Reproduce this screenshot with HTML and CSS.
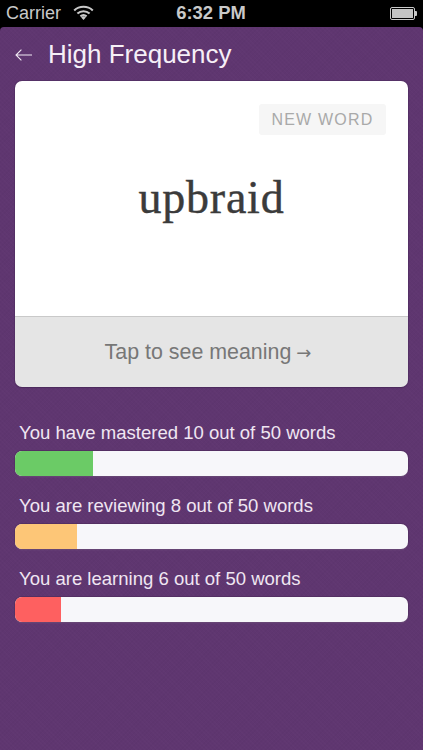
FILE: index.html
```html
<!DOCTYPE html>
<html lang="en">
<head>
<meta charset="utf-8">
<title>High Frequency</title>
<link rel="stylesheet" href="styles.css">
</head>
<body>
<div class="phone">
  <div class="status">
    <div class="status-left">
      <span class="carrier">Carrier</span>
      <svg class="wifi" width="21" height="15" viewBox="0 0 21 15" fill="none" stroke="#c9c9c9" stroke-width="2.1">
        <path d="M1.2 5.4C6.4.6 14.6.6 19.8 5.4"/>
        <path d="M4.4 8.6C7.9 5.4 13.1 5.4 16.6 8.6"/>
        <path d="M7.4 11.4C9.2 9.9 11.8 9.9 13.6 11.4"/>
        <path d="M10.5 15l-2.3-2.6a3.2 3.2 0 0 1 4.6 0z" fill="#c9c9c9" stroke="none"/>
      </svg>
    </div>
    <div class="clock">6:32 PM</div>
    <div class="status-right">
      <div class="battery"><div class="battery-fill"></div></div>
      <div class="battery-tip"></div>
    </div>
  </div>
  <main class="screen">
    <header class="header">
      <svg class="back" width="17" height="12" viewBox="0 0 17 12" fill="none" stroke="#f1e9f3" stroke-width="1.1">
        <path d="M1 6h16M6.4.6 1 6l5.4 5.4"/>
      </svg>
      <h1 class="title">High Frequency</h1>
    </header>
    <section class="card">
      <div class="card-face">
        <span class="tag">NEW WORD</span>
        <div class="word">upbraid</div>
      </div>
      <div class="card-action">Tap to see meaning <span class="arrow">→</span></div>
    </section>
    <section class="stats">
      <div class="stat">
        <div class="stat-label">You have mastered 10 out of 50 words</div>
        <div class="bar"><div class="bar-fill green"></div></div>
      </div>
      <div class="stat">
        <div class="stat-label">You are reviewing 8 out of 50 words</div>
        <div class="bar"><div class="bar-fill amber"></div></div>
      </div>
      <div class="stat">
        <div class="stat-label">You are learning 6 out of 50 words</div>
        <div class="bar"><div class="bar-fill red"></div></div>
      </div>
    </section>
  </main>
</div>
</body>
</html>
```
FILE: styles.css
```css
* { box-sizing: border-box; }
html, body { margin: 0; padding: 0; background: #000; }
body { font-family: "Liberation Sans", Arial, sans-serif; }
.phone { width: 423px; height: 750px; display: flex; flex-direction: column; overflow: hidden; }

.status { height: 27px; flex: none; background: #000; color: #c9c9c9; display: grid; grid-template-columns: 1fr auto 1fr; align-items: center; padding: 0 5px 1px 6px; }
.status-left { display: flex; align-items: center; gap: 12px; }
.carrier { font-size: 18px; font-weight: 400; }
.wifi { display: block; margin-top: -2px; }
.clock { font-size: 18.4px; font-weight: 700; margin-right: 2px; }
.status-right { display: flex; align-items: center; justify-content: flex-end; }
.battery { width: 25px; height: 13px; border: 1px solid #c9c9c9; border-radius: 2px; padding: 1px; }
.battery-fill { width: 100%; height: 100%; background: #c4c4c4; }
.battery-tip { width: 2px; height: 5px; background: #c9c9c9; margin-right: 1px; border-radius: 0 1px 1px 0; }

.screen { flex: 1; border-radius: 4px 4px 0 0; padding: 0 15px; background-color: #5f3670;
  background-image: repeating-linear-gradient(45deg, rgba(255,255,255,.012) 0 1px, transparent 1px 3px), repeating-linear-gradient(-45deg, rgba(0,0,0,.018) 0 1px, transparent 1px 3px); }

.header { height: 54px; display: flex; align-items: center; padding-bottom: 1px; }
.back { display: block; margin-top: 3px; }
.title { margin: 0 0 0 16px; font-size: 26px; font-weight: 400; color: #f6eff7; line-height: 1; }

.card { height: 306px; border-radius: 7px; overflow: hidden; display: flex; flex-direction: column; box-shadow: 0 0 0 1px rgba(70,40,85,.35), 0 1px 1px rgba(60,30,75,.4); }
.card-face { height: 236px; background: #fff; border-bottom: 1px solid #c9c9c9; padding: 23px 22px 0 0; display: flex; flex-direction: column; align-items: flex-end; }
.tag { width: 127px; height: 31px; border-radius: 3px; background: #f6f6f6; color: #a9a9a9; font-size: 16px; letter-spacing: 1.2px; display: flex; align-items: center; justify-content: center; }
.word { align-self: center; margin: 37px 0 0 22px; font-family: "Liberation Serif", Georgia, serif; font-size: 46px; line-height: 52px; color: #3b3b3b; letter-spacing: 0.75px; -webkit-text-stroke: 0.4px #3b3b3b; }
.card-action { flex: 1; background: #e5e5e5; color: #777; font-size: 21.4px; display: flex; align-items: center; justify-content: center; gap: 5px; padding: 1px 7px 0 0; }
.arrow { font-size: 18px; font-family: "DejaVu Sans", sans-serif; }

.stats { display: flex; flex-direction: column; gap: 15px; margin-top: 31px; }
.stat-label { height: 33px; padding-left: 4px; color: #f0e6f2; font-size: 18.55px; line-height: 30px; }
.bar { height: 25px; background: #f7f7fa; border-radius: 7px; overflow: hidden; box-shadow: 0 0 0 1px rgba(70,40,85,.45), 0 1px 1px rgba(200,180,210,.35); }
.bar-fill { height: 100%; }
.green { width: 78px; background: #6bcb66; }
.amber { width: 62px; background: #fdc677; }
.red { width: 46px; background: #fe6060; }
```
